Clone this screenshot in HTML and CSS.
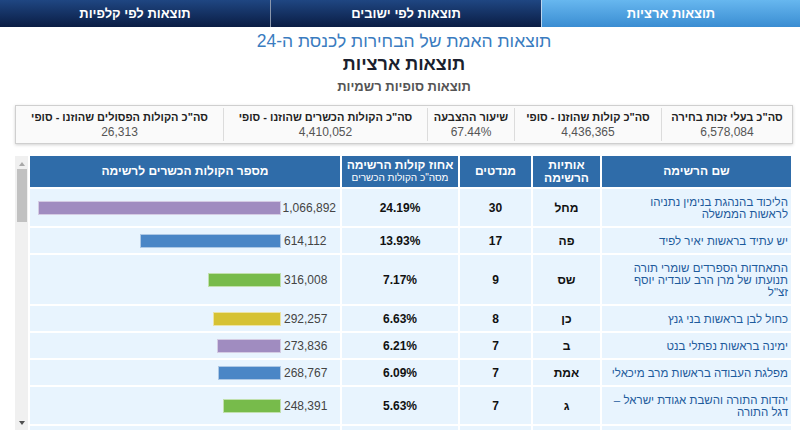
FILE: index.html
```html
<!DOCTYPE html>
<html lang="he" dir="rtl">
<head>
    <meta charset="UTF-8">
    <meta name="viewport" content="width=device-width, initial-scale=1.0">
    <title>תוצאות ארציות</title>
    <link rel="stylesheet" href="styles.css">
</head>
<body>
    <nav class="tabs">
        <a class="tab active" href="#">תוצאות ארציות</a>
        <a class="tab" href="#">תוצאות לפי ישובים</a>
        <a class="tab" href="#">תוצאות לפי קלפיות</a>
    </nav>

    <main class="page">
        <header class="titles">
            <h1>תוצאות האמת של הבחירות לכנסת ה-24</h1>
            <h2>תוצאות ארציות</h2>
            <h3>תוצאות סופיות רשמיות</h3>
        </header>

        <div class="summary">
            <div class="stat">
                <div class="stat-label">סה"כ בעלי זכות בחירה</div>
                <div class="stat-value">6,578,084</div>
            </div>
            <div class="stat">
                <div class="stat-label">סה"כ קולות שהוזנו - סופי</div>
                <div class="stat-value">4,436,365</div>
            </div>
            <div class="stat">
                <div class="stat-label">שיעור ההצבעה</div>
                <div class="stat-value">67.44%</div>
            </div>
            <div class="stat">
                <div class="stat-label">סה"כ הקולות הכשרים שהוזנו - סופי</div>
                <div class="stat-value">4,410,052</div>
            </div>
            <div class="stat">
                <div class="stat-label">סה"כ הקולות הפסולים שהוזנו - סופי</div>
                <div class="stat-value">26,313</div>
            </div>
        </div>

        <div class="results-frame">
            <div class="results-scroll">
                <table class="results">
                    <colgroup>
                        <col class="col-name">
                        <col class="col-letters">
                        <col class="col-seats">
                        <col class="col-percent">
                        <col>
                    </colgroup>
                    <thead>
                        <tr>
                            <th>שם הרשימה</th>
                            <th>אותיות<br>הרשימה</th>
                            <th>מנדטים</th>
                            <th>אחוז קולות הרשימה<span class="sub">מסה"כ הקולות הכשרים</span></th>
                            <th>מספר הקולות הכשרים לרשימה</th>
                        </tr>
                    </thead>
                    <tbody id="rows"></tbody>
                </table>
            </div>
            <!-- scroll track for the results list -->
            <div class="scrollbar">
                <span class="sb-arrow sb-up"></span>
                <span class="sb-thumb"></span>
                <span class="sb-arrow sb-down"></span>
            </div>
        </div>
    </main>

    <script>
        const parties = [
            ["הליכוד בהנהגת בנימין נתניהו\nלראשות הממשלה", "מחל", 30, 1066892, "24.19"],
            ["יש עתיד בראשות יאיר לפיד", "פה", 17, 614112, "13.93"],
            ["התאחדות הספרדים שומרי תורה תנועתו של מרן הרב עובדיה יוסף\nזצ\"ל", "שס", 9, 316008, "7.17"],
            ["כחול לבן בראשות בני גנץ", "כן", 8, 292257, "6.63"],
            ["ימינה בראשות נפתלי בנט", "ב", 7, 273836, "6.21"],
            ["מפלגת העבודה בראשות מרב מיכאלי", "אמת", 7, 268767, "6.09"],
            ["יהדות התורה והשבת אגודת ישראל – דגל התורה", "ג", 7, 248391, "5.63"],
            ["ישראל ביתנו בראשות אביגדור ליברמן", "ל", 7, 248370, "5.63"],
            ["הציונות הדתית בראשות בצלאל סמוטריץ'", "ט", 6, 225641, "5.12"],
            ["הרשימה המשותפת", "ודעם", 6, 212583, "4.82"],
            ["תקווה חדשה בראשות גדעון סער", "ת", 6, 209161, "4.74"],
            ["מרצ", "מרצ", 6, 202218, "4.59"],
            ["הרשימה הערבית המאוחדת", "עם", 4, 167064, "3.79"],
            ["הכלכלית החדשה בראשות ירון זליכה", "ף", 0, 34883, "0.79"],
            ["רפא - בריאות חינוך רווחה", "נץ", 0, 9400, "0.21"],
            ["הצעירים בוערים", "זך", 0, 6300, "0.14"],
            ["מפלגת הפיראטים", "ץ", 0, 3100, "0.07"],
            ["תנופה", "זנ", 0, 2900, "0.07"],
            ["מען", "ני", 0, 2700, "0.06"],
            ["כבוד האדם", "ינ", 0, 2400, "0.05"],
            ["צומת", "צ", 0, 2200, "0.05"],
            ["בטחון חברתי", "נר", 0, 1900, "0.04"],
            ["חץ", "כך", 0, 1700, "0.04"],
            ["קמ\"ה", "קי", 0, 1500, "0.03"],
            ["שמע", "נז", 0, 1300, "0.03"],
            ["אני ואתה", "ק", 0, 1200, "0.03"],
            ["יש כיוון", "יז", 0, 1100, "0.02"],
            ["ברית השותפות", "זץ", 0, 1000, "0.02"],
            ["דמוקרטורה", "יך", 0, 900, "0.02"],
            ["עתיד אחד", "י", 0, 800, "0.02"],
            ["כל ישראל אחים", "קך", 0, 700, "0.02"],
            ["הלב היהודי", "קץ", 0, 600, "0.01"],
            ["חופש כלכלי", "צכ", 0, 500, "0.01"],
            ["המפלגה החדשה", "קנ", 0, 450, "0.01"],
            ["אחריות", "צף", 0, 400, "0.01"],
            ["אמונה", "כ", 0, 350, "0.01"],
            ["הרשימה הערבית", "ז", 0, 300, "0.01"],
            ["צעד", "נ", 0, 250, "0.01"],
            ["אנחנו", "קף", 0, 200, "0.00"]
        ];

        const barColors = ["#a08cc0", "#4a86c6", "#77bb4b", "#d6c234"];
        const maxBar = 241;

        function renderRows() {
            const body = document.getElementById("rows");
            const top = parties[0][3];

            parties.forEach((p, i) => {
                const [name, letters, seats, votes, percent] = p;
                const width = Math.max(1, Math.round(votes / top * maxBar));
                const tr = document.createElement("tr");
                tr.innerHTML = `
                    <td class="name">${name}</td>
                    <td class="strong">${letters}</td>
                    <td class="strong">${seats}</td>
                    <td class="strong">${percent}%</td>
                    <td class="votes">
                        <div class="votes-wrap">
                            <span class="votes-num">${votes.toLocaleString("en-US")}</span>
                            <span class="bar" style="width:${width}px;background:${barColors[i % 4]}"></span>
                        </div>
                    </td>`;
                body.appendChild(tr);
            });
        }

        renderRows();
    </script>
</body>
</html>
```

FILE: styles.css
```css
html, body {
    margin: 0;
    padding: 0;
    height: 100%;
    overflow: hidden;
}
body {
    font-family: "Liberation Sans", Arial, sans-serif;
    background: #fff;
    color: #222;
    direction: rtl;
}

/* top navigation */
.tabs {
    display: flex;
    height: 27px;
}
.tab {
    display: flex;
    align-items: center;
    justify-content: center;
    color: #fff;
    font-size: 13px;
    font-weight: bold;
    text-decoration: none;
    background: linear-gradient(#1f4682, #0a1d44);
    border-left: 1px solid #8a97ad;
    width: 270px;
}
.tab:last-child {
    border-left: none;
    width: auto;
    flex: 1;
}
.tab.active {
    width: 258px;
    background: linear-gradient(#67b7ef, #3a8dd2);
    border-left: 1px solid #bcd6ee;
}

.page {
    margin: 0 7px 0 15px;
}

.titles {
    text-align: center;
    padding-top: 4px;
}
.titles h1 {
    margin: 0;
    font-size: 17.5px;
    font-weight: normal;
    color: #3a7cc0;
    line-height: 20px;
}
.titles h2 {
    margin: 0;
    font-size: 18px;
    font-weight: bold;
    color: #1b1f2e;
    line-height: 26px;
}
.titles h3 {
    margin: 2px 0 0;
    font-size: 13px;
    font-weight: bold;
    color: #555;
    line-height: 16px;
}

/* summary numbers */
.summary {
    display: grid;
    grid-template-columns: 131px 147px 87px 204px 1fr;
    margin-top: 10px;
    border: 1px solid #cfcfcf;
    background: #fafafa;
    box-shadow: 0 1px 3px rgba(0, 0, 0, 0.18);
    padding: 2px 0;
}
.stat {
    text-align: center;
    border-left: 1px solid #dcdcdc;
    padding: 1px 2px;
}
.stat:last-child {
    border-left: none;
}
.stat-label {
    font-size: 11px;
    font-weight: bold;
    color: #222;
    line-height: 16px;
    white-space: nowrap;
}
.stat-value {
    font-size: 12px;
    color: #555;
    line-height: 15px;
}

/* results table with its scroll track on the left */
.results-frame {
    display: flex;
    height: 276px;
    margin-top: 12px;
}
.results-scroll {
    flex: 1;
    overflow: hidden;
}
.scrollbar {
    width: 13px;
    flex-shrink: 0;
    background: #f0f0f0;
    display: flex;
    flex-direction: column;
    align-items: center;
}
.sb-arrow {
    width: 0;
    height: 0;
    border-left: 3.5px solid transparent;
    border-right: 3.5px solid transparent;
}
.sb-up {
    margin-top: 6px;
    border-bottom: 4px solid #a8a8a8;
}
.sb-down {
    margin-top: auto;
    margin-bottom: 7px;
    border-top: 4px solid #505050;
}
.sb-thumb {
    width: 10px;
    height: 53px;
    margin-top: 3px;
    background: #c1c1c1;
}

.results {
    width: 100%;
    border-collapse: separate;
    border-spacing: 2px;
    table-layout: fixed;
    margin-top: -2px;
}
.col-name { width: 189px; }
.col-letters { width: 67px; }
.col-seats { width: 71px; }
.col-percent { width: 116px; }

.results th {
    background: #2f6ca9;
    color: #fff;
    font-size: 12px;
    font-weight: bold;
    line-height: 13px;
    height: 31px;
    padding: 0 4px;
}
.results th .sub {
    display: block;
    font-size: 10px;
    font-weight: normal;
    line-height: 12px;
}
.results td {
    background: #e8f4fe;
    font-size: 12px;
    line-height: 12px;
    padding: 7px 4px 6px;
    text-align: center;
    vertical-align: middle;
}
.results td.name {
    text-align: right;
    color: #1e5b9c;
    font-size: 11.5px;
    padding-right: 3px;
    white-space: pre-line;
}
.results td.strong {
    font-weight: bold;
    color: #111;
}
.results td.votes {
    padding: 4px 4px 4px 4px;
}
.votes-wrap {
    display: flex;
    align-items: center;
}
.votes-num {
    width: 52px;
    margin-left: 3px;
    text-align: left;
    color: #444;
    font-size: 12px;
    line-height: 14px;
}
.bar {
    display: block;
    height: 12px;
    border: 1px solid rgba(255, 255, 255, 0.55);
}
```
